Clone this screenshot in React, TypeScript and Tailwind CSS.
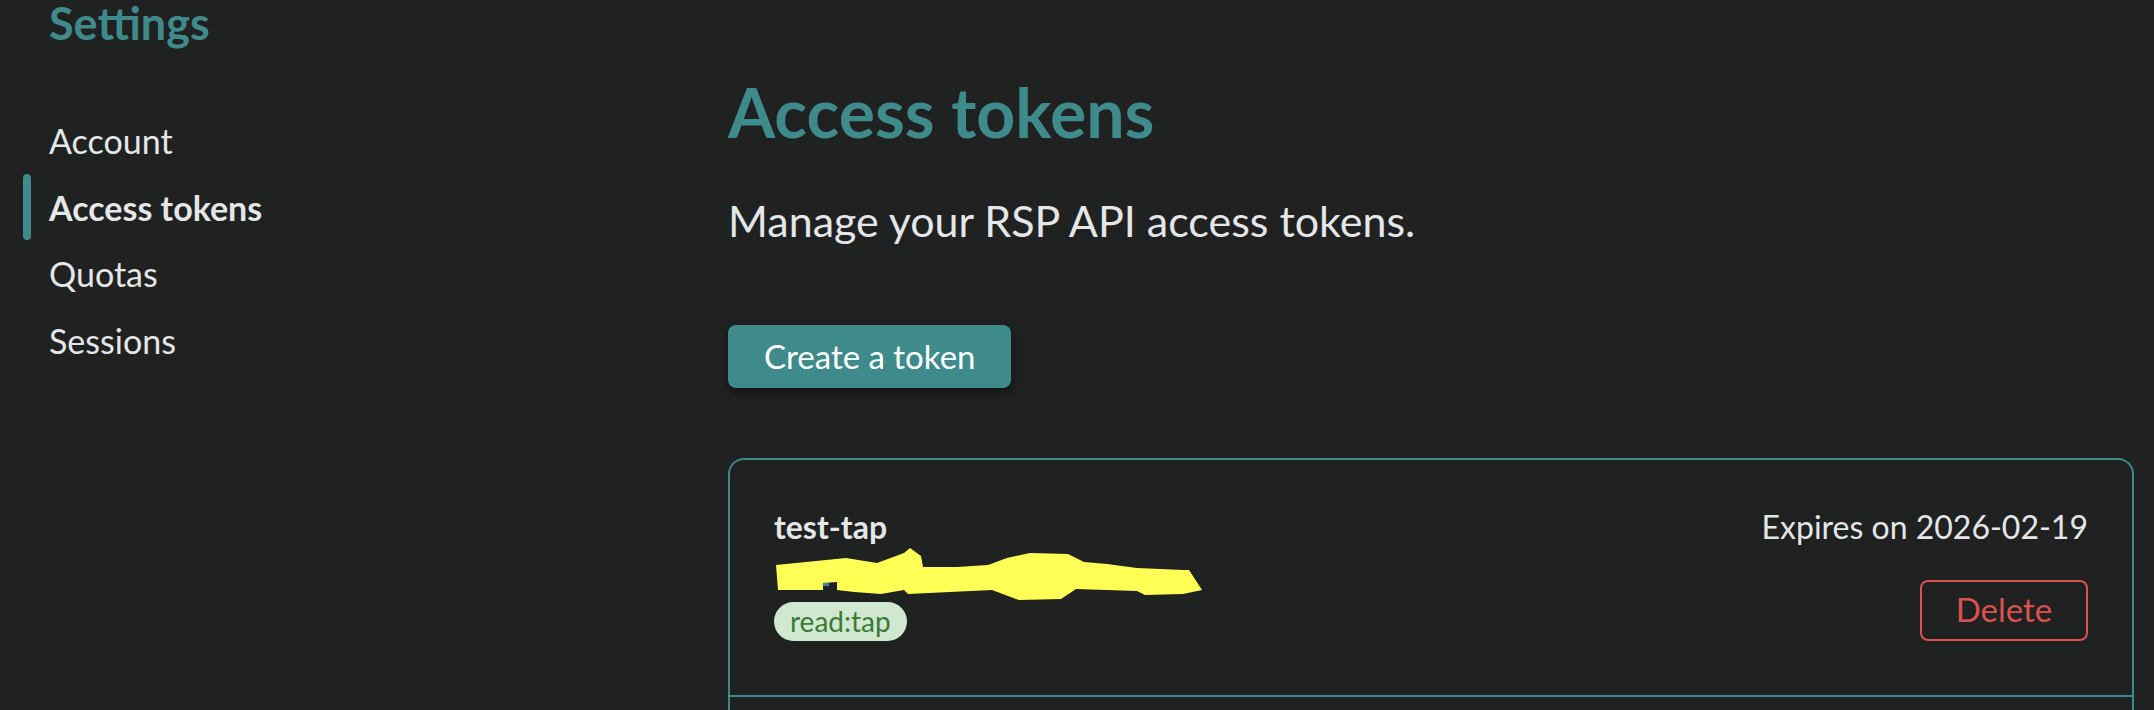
import React from 'react';

const navItems = [
  { label: 'Account', active: false },
  { label: 'Access tokens', active: true },
  { label: 'Quotas', active: false },
  { label: 'Sessions', active: false },
];

const Sidebar: React.FC = () => {
  return (
    <aside className="w-[728px] shrink-0">
      <h2 className="pl-[49px] text-[45px] leading-[1.05] font-bold text-[#3f8a8b]">Settings</h2>
      <nav className="mt-[60px] flex flex-col">
        {navItems.map((item) => (
          <a key={item.label} className="flex h-[66.5px] items-center gap-[18px] pl-[23px]">
            <span
              className={`h-full w-[8px] rounded-full ${item.active ? 'bg-[#3f8a8b]' : 'bg-transparent'}`}
            />
            <span className={`text-[34px] text-[#e4e6e8] ${item.active ? 'font-bold' : ''}`}>
              {item.label}
            </span>
          </a>
        ))}
      </nav>
    </aside>
  );
};

const Scribble: React.FC = () => (
  <svg
    className="pointer-events-none absolute left-0 top-0"
    width="440"
    height="60"
    viewBox="770 550 440 60"
  >
    <path
      fill="#ffff55"
      d="M772 568 L842 561 L873 566 L900 556 L906 551 L917 559 L919 570 L953 570 L984 568 L1003 561 L1026 556 L1064 557 L1080 565 L1103 567 L1133 571 L1179 573 L1185 573 L1198 593 L1179 597 L1141 598 L1133 594 L1072 592 L1057 602 L1015 603 L988 593 L904 597 L900 593 L877 597 L850 595 L833 593 L833 585 L819 586 L819 593 L774 593 Z"
    />
  </svg>
);

const TokenRow: React.FC = () => {
  return (
    <div className="flex items-start justify-between px-[44px] pt-[48px] pb-[54px]">
      <div className="flex flex-col items-start">
        <div className="text-[32px] leading-[1.2] font-bold text-[#e4e6e8]">test-tap</div>
        <div className="relative h-[55px] w-[430px]">
          <span className="absolute left-[36px] top-[36px] h-[3px] w-[19px] bg-[#3b7fa8]" />
          <Scribble />
        </div>
        <span className="rounded-full bg-[#cfe8cf] px-[16px] text-[28px] leading-[39px] text-[#3b7a35]">
          read:tap
        </span>
      </div>
      <div className="flex flex-col items-end">
        <div className="text-[32px] leading-[1.2] text-[#e4e6e8]">Expires on 2026-02-19</div>
        <button className="mt-[33px] h-[61px] w-[168px] rounded-[8px] border-2 border-[#d9534f] text-[33px] text-[#d9534f]">
          Delete
        </button>
      </div>
    </div>
  );
};

const App: React.FC = () => {
  return (
    <div className="flex min-h-[710px] w-full overflow-hidden bg-[#202121] font-['Lato',sans-serif]">
      <Sidebar />
      <main className="flex-1 pr-[20px]">
        <h1 className="mt-[71px] text-[68px] leading-[1.2] font-bold text-[#3f8a8b]">Access tokens</h1>
        <p className="mt-[42px] text-[43px] leading-[1.2] text-[#e4e6e8]">
          Manage your RSP API access tokens.
        </p>
        <button className="mt-[79px] h-[63px] rounded-[8px] bg-[#3f8a8b] px-[36px] text-[33px] text-white shadow-[0_4px_10px_rgba(0,0,0,0.45)]">
          Create a token
        </button>
        <div className="mt-[70px] rounded-t-[16px] border-2 border-b-0 border-[#3f8a8b]">
          <TokenRow />
          <div className="h-[60px] border-t-2 border-[#3f8a8b]" />
        </div>
      </main>
    </div>
  );
};

export default App;
